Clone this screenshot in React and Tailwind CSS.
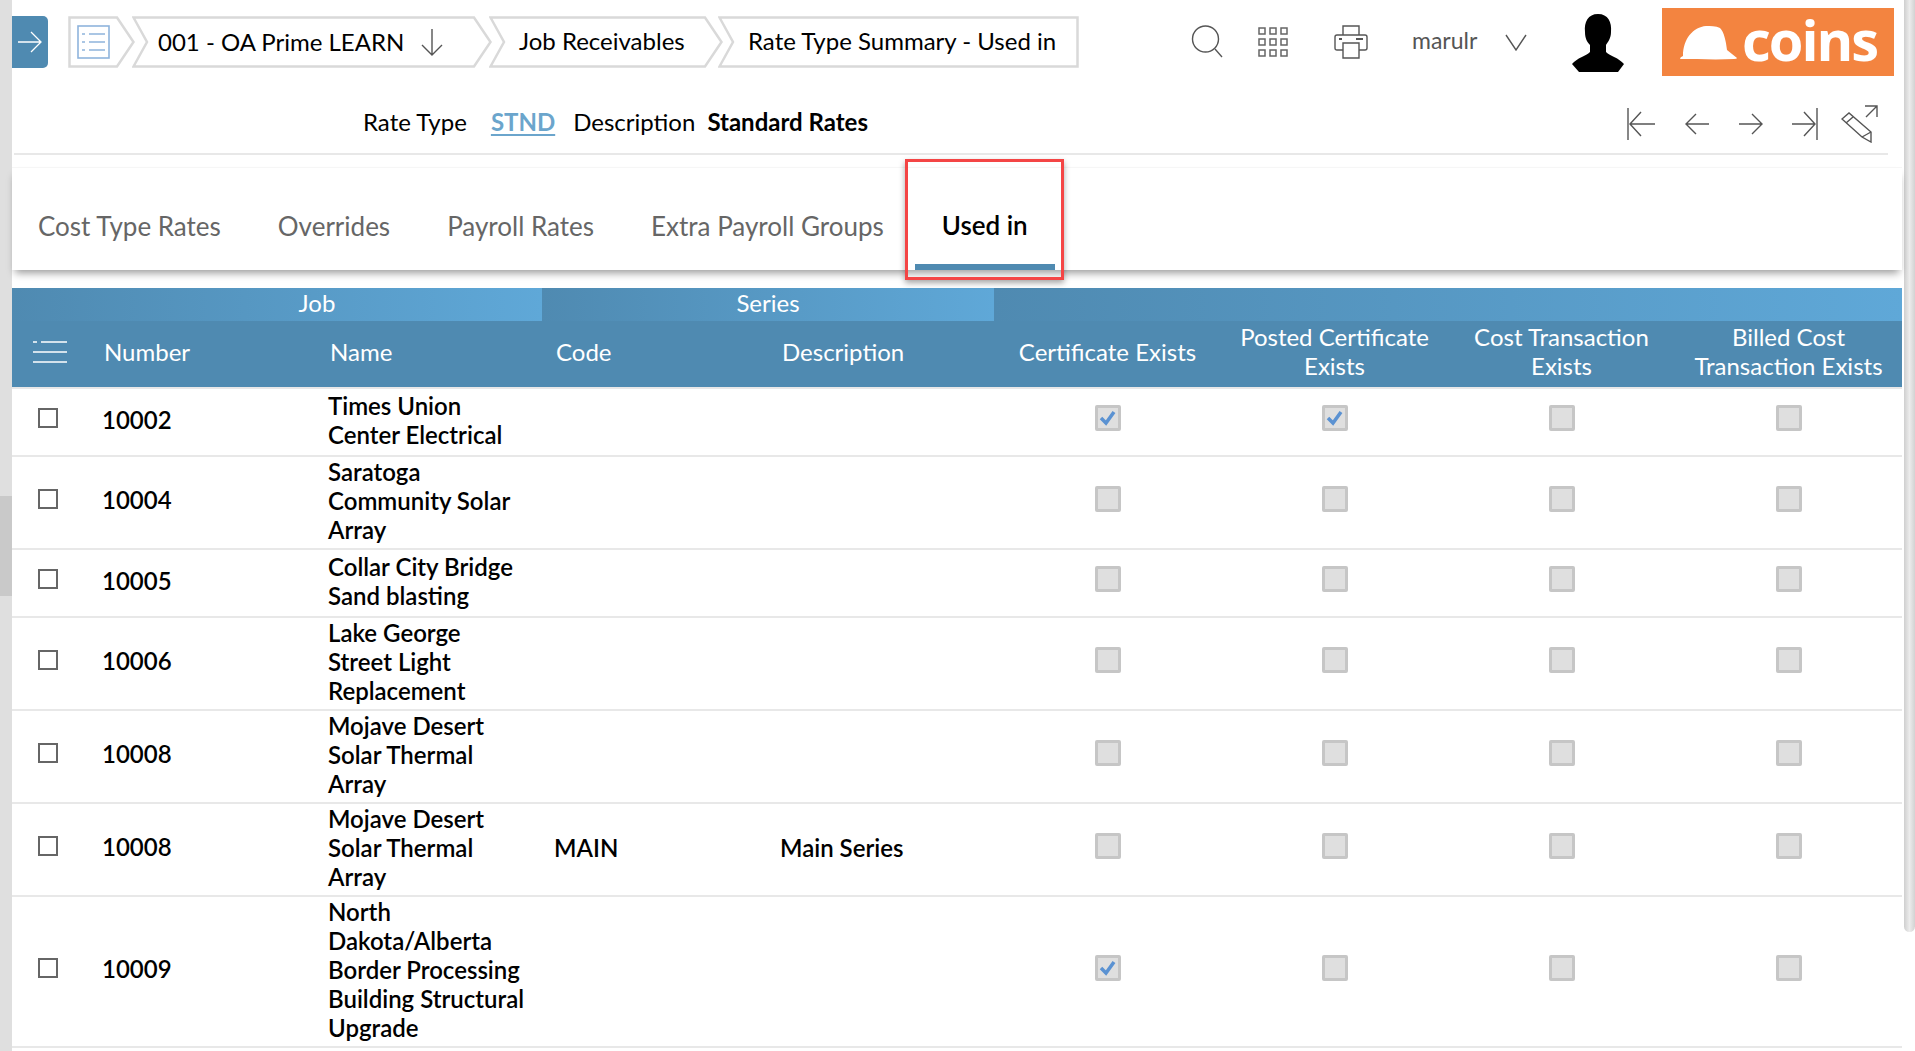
import React from "react";

const rows = [
  { h: "h-[68px]", num: "10002", name: "Times Union Center Electrical", c1: true, c2: true },
  { h: "h-[93px]", num: "10004", name: "Saratoga Community Solar Array" },
  { h: "h-[68px]", num: "10005", name: "Collar City Bridge Sand blasting" },
  { h: "h-[93px]", num: "10006", name: "Lake George Street Light Replacement" },
  { h: "h-[93px]", num: "10008", name: "Mojave Desert Solar Thermal Array" },
  { h: "h-[93px]", num: "10008", name: "Mojave Desert Solar Thermal Array", code: "MAIN", desc: "Main Series" },
  { h: "h-[151px]", num: "10009", name: "North Dakota/Alberta Border Processing Building Structural Upgrade", c1: true },
];

const gridCols = "grid grid-cols-[80px_225px_225px_226px_226px_227px_227px_227px_227px]";

function Crumb({ w, first, last, children, className }) {
  const h = 52;
  const d = first
    ? `M1.5 1.5H${w - 18}L${w - 1.5} 26L${w - 18} ${h - 1.5}H1.5Z`
    : last
    ? `M1.5 1.5H${w - 1.5}V${h - 1.5}H1.5L15 26Z`
    : `M1.5 1.5H${w - 18}L${w - 1.5} 26L${w - 18} ${h - 1.5}H1.5L15 26Z`;
  return (
    <div className={`relative h-[52px] flex items-center shrink-0 ${className || ""}`}>
      <svg className="absolute inset-0" width={w} height={h} fill="none" stroke="#d9d9d9" strokeWidth="2.5">
        <path d={d} />
      </svg>
      <div className="relative flex items-center">{children}</div>
    </div>
  );
}

function Thin({ w, h, children, className }) {
  return (
    <svg width={w} height={h} viewBox={`0 0 ${w} ${h}`} fill="none" stroke="#555" strokeWidth="1.4" className={`shrink-0 ${className || ""}`}>
      {children}
    </svg>
  );
}

function Disabled({ checked }) {
  return (
    <div className="w-[26px] h-[26px] mb-[4px] border-[3px] border-[#c6c6c6] bg-[#dfdfdf] rounded-[2px] flex items-center justify-center">
      {checked && (
        <svg width="20" height="20" viewBox="0 0 20 20" fill="none" stroke="#5b92d2" strokeWidth="3.5">
          <path d="M3 10L8 15L16 4" />
        </svg>
      )}
    </div>
  );
}

export default function App() {
  return (
    <div className="flex h-screen w-full overflow-hidden bg-white font-[Lato,sans-serif] text-[24px] leading-[29px] text-black">
      <div className="w-[12px] shrink-0 bg-[#dfdfdf]">
        <div className="mt-[496px] h-[100px] bg-[#c9c9c9]" />
      </div>

      <div className="w-[1891px] shrink-0 flex flex-col">
        {/* top bar */}
        <div className="h-[84px] pt-[16px] flex items-start shrink-0">
          <div className="w-[36px] h-[52px] bg-[#4f8ab1] rounded-r-[5px] flex items-center justify-center">
            <svg width="26" height="26" viewBox="0 0 26 26" fill="none" stroke="#fff" strokeWidth="1.3">
              <path d="M1 13H24M14 3L24 13L14 23" />
            </svg>
          </div>
          <Crumb w={67} first className="w-[67px] ml-[20px]">
            <svg width="34" height="34" viewBox="0 0 34 34" fill="none" className="ml-[9px]" stroke="#8fb4dc" strokeWidth="1.6">
              <rect x="1" y="1" width="31" height="32" />
              <path d="M5 9H8M12 9H28M5 17H8M12 17H28M5 25H8M12 25H28" />
            </svg>
          </Crumb>
          <Crumb w={360} className="w-[360px] -ml-[3px]">
            <span className="ml-[26px] whitespace-nowrap -mt-[1px]">001 - OA Prime LEARN</span>
            <Thin w={24} h={28} className="ml-[16px]">
              <path d="M12 1V27M2 17L12 27L22 17" />
            </Thin>
          </Crumb>
          <Crumb w={234} className="w-[234px] -ml-[3px]">
            <span className="ml-[30px] whitespace-nowrap -mt-[3px]">Job Receivables</span>
          </Crumb>
          <Crumb w={361} last className="w-[361px] -ml-[5px]">
            <span className="ml-[30px] whitespace-nowrap -mt-[3px]">Rate Type Summary - Used in</span>
          </Crumb>

          <Thin w={32} h={33} className="ml-[112px] mt-[9px]">
            <circle cx="14.5" cy="14" r="13" />
            <path d="M24 24L31 32" />
          </Thin>
          <svg width="30" height="30" viewBox="0 0 30 30" fill="none" stroke="#666" strokeWidth="1.5" className="ml-[35px] mt-[11px] shrink-0">
            <rect x="1" y="1" width="6" height="6" /><rect x="12" y="1" width="6" height="6" /><rect x="23" y="1" width="6" height="6" />
            <rect x="1" y="12" width="6" height="6" /><rect x="12" y="12" width="6" height="6" /><rect x="23" y="12" width="6" height="6" />
            <rect x="1" y="23" width="6" height="6" /><rect x="12" y="23" width="6" height="6" /><rect x="23" y="23" width="6" height="6" />
          </svg>
          <Thin w={34} h={34} className="ml-[46px] mt-[9px]">
            <path d="M9 10V1H25V10" />
            <path d="M9 25H3Q1 25 1 23V12Q1 10 3 10H31Q33 10 33 12V23Q33 25 31 25H25" />
            <path d="M9 18H25V33H9Z" />
            <path d="M5 14H8M22 14H29" strokeWidth="2" />
          </Thin>
          <span className="ml-[44px] w-[68px] mt-[8px] text-[#555] text-[23px] leading-[32px]">marulr</span>
          <Thin w={22} h={17} className="ml-[25px] mt-[18px]">
            <path d="M1 1L11 16L21 1" />
          </Thin>
          <svg width="52" height="58" viewBox="0 0 52 58" fill="#000" className="ml-[45px] -mt-[2px] shrink-0">
            <path d="M26 0C36 0 40 8 39 18C39 24 36 28 34 31L34 38C38 42 47 44 52 50L46 58H7L0 50C5 44 14 42 18 38L18 31C15 28 13 24 13 18C12 8 16 0 26 0Z" />
          </svg>
          <div className="ml-[38px] -mt-[8px] w-[232px] h-[68px] bg-[#f38440] flex items-center shrink-0">
            <svg width="58" height="34" viewBox="0 0 58 34" fill="#fff" className="ml-[18px] mt-[1px] shrink-0">
              <path d="M3 30C3 13 13 1 26 0C30 0 36 0 40 2C44 6 46 15 47 24L57 32Q57 33 54 33C36 34 16 33 0 33Q0 31 3 30Z" />
            </svg>
            <span className="ml-[4px] text-white text-[56px] leading-[60px] font-bold tracking-[-2px] font-['Open_Sans',sans-serif] -mt-[7px]">coins</span>
          </div>
        </div>

        {/* rate row */}
        <div className="h-[71px] mr-[15px] ml-[2px] border-b-2 border-[#e8e8e8] flex items-center shrink-0">
          <div className="ml-[349px] flex items-center pt-[5px]">
            <span>Rate Type</span>
            <span className="ml-[24px] font-bold text-[#6ba5cc] underline underline-offset-[3px] decoration-2">STND</span>
            <span className="ml-[18px]">Description</span>
            <span className="ml-[12px] font-bold">Standard Rates</span>
          </div>
          <div className="ml-auto flex items-center pt-[11px]">
            <Thin w={28} h={32}>
              <path d="M1 0V32M3 16H28M14 4L3 16L14 28" />
            </Thin>
            <Thin w={24} h={24} className="ml-[30px]">
              <path d="M1 12H24M11 2L1 12L11 22" />
            </Thin>
            <Thin w={24} h={24} className="ml-[30px]">
              <path d="M0 12H23M13 2L23 12L13 22" />
            </Thin>
            <Thin w={26} h={32} className="ml-[29px]">
              <path d="M25 0V32M0 16H23M12 4L23 16L12 28" />
            </Thin>
            <Thin w={38} h={38} className="ml-[23px] -mt-[1px] mr-[9px]">
              <path d="M1 14L8 8L30 27L30 37L21 32Z" />
              <path d="M5 18L12 12M21 32L30 27" />
              <path d="M25 12L36 1M24 1H36V12" />
            </Thin>
          </div>
        </div>

        {/* tabs */}
        <div className="mt-[12px] h-[103px] shrink-0 border-t border-[#f6f6f6] shadow-[0_6px_8px_-3px_rgba(0,0,0,0.4)] flex gap-[5px] text-[26px] text-[#666] mr-[1px] bg-white relative">
          <div className="px-[26px] h-full flex items-center pt-[14px] whitespace-nowrap">Cost Type Rates</div>
          <div className="px-[26px] h-full flex items-center pt-[14px] whitespace-nowrap">Overrides</div>
          <div className="px-[26px] h-full flex items-center pt-[14px] whitespace-nowrap">Payroll Rates</div>
          <div className="px-[26px] h-full flex items-center pt-[14px] whitespace-nowrap">Extra Payroll Groups</div>
          <div className="relative px-[27px] h-full flex items-center pt-[14px] whitespace-nowrap text-black font-semibold border-b-[6px] border-[#4f8ab1]">
            <span className="mt-[5px]">Used in</span>
            <div className="absolute -top-[9px] -bottom-[16px] -left-[10px] -right-[9px] border-[3px] border-[#f44545] shadow-[0_3px_6px_rgba(0,0,0,0.35)]" />
          </div>
        </div>

        {/* table */}
        <div className="mt-[18px] w-[1890px] shrink-0 text-white">
          <div className={`${gridCols} h-[33px]`}>
            <div className="col-span-3 pl-[80px] text-center bg-gradient-to-r from-[#4f8ab1] to-[#5fa8d8]">Job</div>
            <div className="col-span-2 text-center bg-gradient-to-r from-[#4f8ab1] to-[#5fa8d8]">Series</div>
            <div className="col-span-4 bg-gradient-to-r from-[#4f8ab1] to-[#5fa8d8]" />
          </div>
          <div className={`${gridCols} h-[66px] bg-[#4f8ab1] items-center pb-[6px]`}>
            <div className="pl-[21px] pt-[2px]">
              <svg width="34" height="22" viewBox="0 0 34 22" fill="none" stroke="#fff" strokeWidth="1.3">
                <path d="M0 1H4M8 1H34M0 11H34M0 21H34" />
              </svg>
            </div>
            <div className="pl-[12px]">Number</div>
            <div className="pl-[13px]">Name</div>
            <div className="pl-[14px]">Code</div>
            <div className="pl-[14px]">Description</div>
            <div className="text-center">Certificate Exists</div>
            <div className="text-center">Posted Certificate<br />Exists</div>
            <div className="text-center">Cost Transaction<br />Exists</div>
            <div className="text-center">Billed Cost<br />Transaction Exists</div>
          </div>
          <div className="h-[2px] bg-[#e8e8e8]" />
          <div className="text-black font-semibold">
            {rows.map((r, i) => (
              <div key={i} className={`${gridCols} ${r.h} items-center border-b-2 border-[#e8e8e8] pb-[4px]`}>
                <div className="pl-[26px]">
                  <div className="w-[20px] h-[20px] mb-[4px] border-2 border-[#666] bg-white" />
                </div>
                <div className="pl-[10px] mb-[2px]">{r.num}</div>
                <div className="pl-[11px] w-[213px]">{r.name}</div>
                <div className="pl-[12px]">{r.code}</div>
                <div className="pl-[12px]">{r.desc}</div>
                <div className="flex justify-center"><Disabled checked={r.c1} /></div>
                <div className="flex justify-center"><Disabled checked={r.c2} /></div>
                <div className="flex justify-center"><Disabled /></div>
                <div className="flex justify-center"><Disabled /></div>
              </div>
            ))}
          </div>
        </div>
      </div>

      <div className="w-[12px] shrink-0 bg-white pl-[1px]">
        <div className="h-[932px] rounded-b-[6px] bg-gradient-to-r from-[#cfcfcf] via-[#ececec] to-[#d2d2d2]" />
      </div>
    </div>
  );
}
